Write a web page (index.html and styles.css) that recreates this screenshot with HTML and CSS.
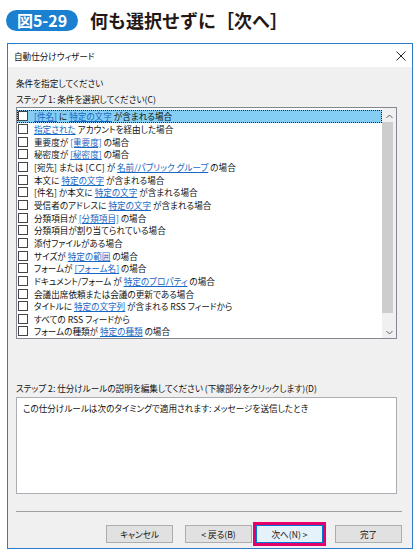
FILE: index.html
```html
<!DOCTYPE html>
<html lang="ja">
<head>
    <meta charset="UTF-8">
    <meta name="viewport" content="width=device-width, initial-scale=1.0">
    <title>図5-29 何も選択せずに［次へ］</title>
    <link rel="stylesheet" href="styles.css">
</head>
<body>
    <div class="figure-head">
        <span class="badge">図5-29</span>
        <h1>何も選択せずに［次へ］</h1>
    </div>

    <div class="dialog">
        <div class="titlebar">
            <span>自動仕分けウィザード</span>
            <svg class="close" width="10" height="10" viewBox="0 0 10 10">
                <path d="M0.5 0.5 L9.5 9.5 M9.5 0.5 L0.5 9.5" stroke="#222" stroke-width="1" fill="none"/>
            </svg>
        </div>

        <div class="dialog-body">
            <p class="label first">条件を指定してください</p>
            <p class="label">ステップ 1: 条件を選択してください(C)</p>

            <div class="listbox">
                <ul class="rules">
                    <li class="selected"><span class="check"></span><span><a>[件名]</a> に <a>特定の文字</a> が含まれる場合</span></li>
                    <li><span class="check"></span><span><a>指定された</a> アカウントを経由した場合</span></li>
                    <li><span class="check"></span><span>重要度が <a>[重要度]</a> の場合</span></li>
                    <li><span class="check"></span><span>秘密度が <a>[秘密度]</a> の場合</span></li>
                    <li><span class="check"></span><span>[宛先] または [ＣＣ] が <a>名前/パブリック グループ</a> の場合</span></li>
                    <li><span class="check"></span><span>本文に <a>特定の文字</a> が含まれる場合</span></li>
                    <li><span class="check"></span><span>[件名] か本文に <a>特定の文字</a> が含まれる場合</span></li>
                    <li><span class="check"></span><span>受信者のアドレスに <a>特定の文字</a> が含まれる場合</span></li>
                    <li><span class="check"></span><span>分類項目が <a>[分類項目]</a> の場合</span></li>
                    <li><span class="check"></span><span>分類項目が割り当てられている場合</span></li>
                    <li><span class="check"></span><span>添付ファイルがある場合</span></li>
                    <li><span class="check"></span><span>サイズが <a>特定の範囲</a> の場合</span></li>
                    <li><span class="check"></span><span>フォームが <a>[フォーム名]</a> の場合</span></li>
                    <li><span class="check"></span><span>ドキュメント/フォーム が <a>特定のプロパティ</a> の場合</span></li>
                    <li><span class="check"></span><span>会議出席依頼または会議の更新である場合</span></li>
                    <li><span class="check"></span><span>タイトルに <a>特定の文字列</a> が含まれる RSS フィードから</span></li>
                    <li><span class="check"></span><span>すべての RSS フィードから</span></li>
                    <li><span class="check"></span><span>フォームの種類が <a>特定の種類</a> の場合</span></li>
                </ul>
                <div class="scrollbar">
                    <div class="arrow">
                        <svg width="7" height="5" viewBox="0 0 7 5"><path d="M0.5 4 L3.5 1 L6.5 4" stroke="#606060" fill="none"/></svg>
                    </div>
                    <div class="thumb"></div>
                    <div class="arrow">
                        <svg width="7" height="5" viewBox="0 0 7 5"><path d="M0.5 1 L3.5 4 L6.5 1" stroke="#606060" fill="none"/></svg>
                    </div>
                </div>
            </div>

            <p class="label step2">ステップ 2: 仕分けルールの説明を編集してください (下線部分をクリックします)(D)</p>
            <div class="desc">この仕分けルールは次のタイミングで適用されます: メッセージを送信したとき</div>

            <div class="sep"></div>

            <div class="buttons">
                <button type="button">キャンセル</button>
                <button type="button" class="back">&lt; 戻る(B)</button>
                <button type="button" class="next">次へ(N) &gt;</button>
                <button type="button" class="finish">完了</button>
            </div>
        </div>
    </div>
</body>
</html>
```

FILE: styles.css
```css
body {
    margin: 0;
    width: 417px;
    height: 555px;
    background: #fff;
    font-family: "Noto Sans CJK JP", sans-serif;
    color: #111;
    overflow: hidden;
}

.figure-head {
    display: flex;
    align-items: center;
    height: 40px;
    padding-left: 6px;
}

.badge {
    display: inline-block;
    width: 72px;
    height: 21px;
    line-height: 21px;
    border-radius: 11px;
    background: #1a80cf;
    color: #fff;
    font-weight: bold;
    font-size: 16px;
    text-align: center;
}

h1 {
    margin: 0 0 0 12px;
    font-size: 18px;
    font-weight: bold;
    color: #231815;
}

.dialog {
    margin: 3px 0 0 7px;
    width: 404px;
    height: 504px;
    border: 1px solid #2a7cc9;
    background: #f0f0f0;
    font-size: 8.6px;
    font-feature-settings: "palt";
}

.titlebar {
    display: flex;
    align-items: center;
    justify-content: space-between;
    height: 23px;
    padding: 0 6px;
    background: #fff;
}

.dialog-body {
    padding: 9px 10px 0 8px;
}

.label {
    margin: 0;
    height: 14px;
    line-height: 14px;
    white-space: nowrap;
}

.label.first {
    margin-bottom: 2px;
}

.listbox {
    display: flex;
    margin: 1px 5px 0 0;
    height: 230px;
    border: 1px solid #828790;
    background: #fff;
}

.rules {
    flex: 1;
    margin: 0;
    padding: 2px 0 0 0;
    list-style: none;
}

.rules li {
    display: flex;
    align-items: center;
    height: 12.67px;
    padding-left: 1px;
    white-space: nowrap;
}

.rules li.selected {
    background: #84cdf3;
    outline: 1px dotted #222;
    outline-offset: -1px;
}

.check {
    width: 8px;
    height: 8px;
    margin-right: 6px;
    border: 1px solid #444;
    background: #fff;
    flex-shrink: 0;
}

.rules a {
    color: #1767c4;
    text-decoration: underline;
}

.scrollbar {
    display: flex;
    flex-direction: column;
    width: 14px;
    padding-top: 2px;
    background: #f0f0f0;
}

.arrow {
    display: flex;
    align-items: center;
    justify-content: center;
    height: 12px;
}

.thumb {
    height: 191px;
    margin: 0 3px 13px 0;
    background: #cdcdcd;
}

.step2 {
    margin-top: 42px;
}

.desc {
    margin: 2px 5px 0 0;
    height: 87px;
    padding: 4px 6px;
    border: 1px solid #abadb3;
    background: #fff;
    white-space: nowrap;
    line-height: 12px;
}

.sep {
    margin-top: 17px;
    height: 1px;
    background: #a0a0a0;
}

.buttons {
    display: flex;
    justify-content: flex-end;
    margin-top: 13px;
}

button {
    width: 67px;
    height: 18px;
    margin-left: 12px;
    padding: 0;
    border: 1px solid #adadad;
    background: #e1e1e1;
    color: #111;
    font-family: "Noto Sans CJK JP", sans-serif;
    font-size: 8.6px;
    font-feature-settings: "palt";
}

button.next {
    margin-left: 4px;
    background: #e5f1fb;
    border-color: #0078d7;
    outline: 3px solid #e5006a;
}
```
